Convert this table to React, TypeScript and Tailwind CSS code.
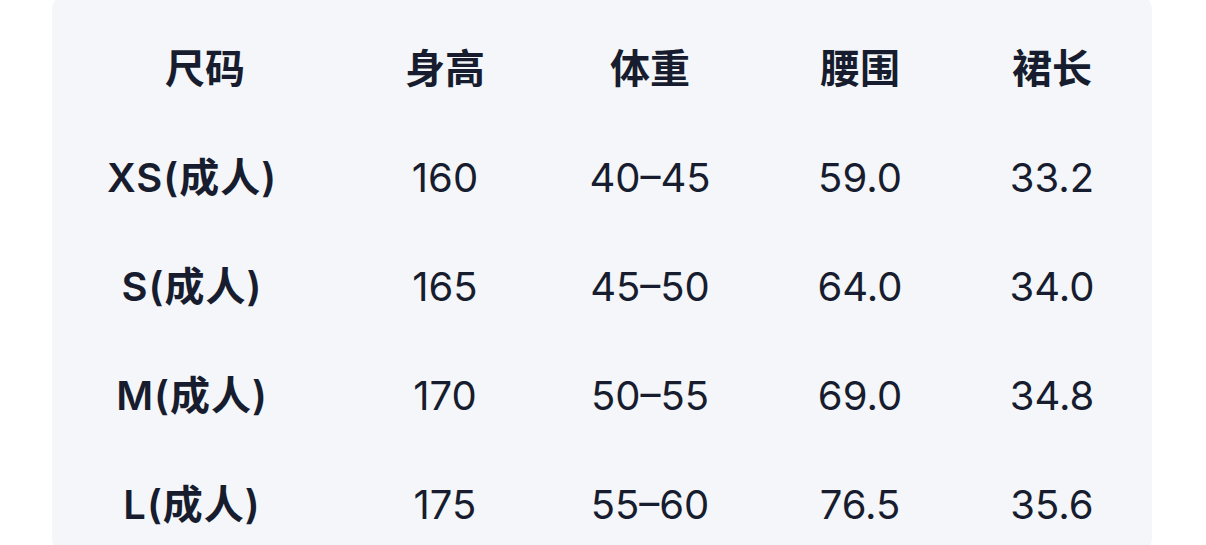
const headers = ['尺码', '身高', '体重', '腰围', '裙长'];

const rows = [
  ['XS(成人)', '160', '40–45', '59.0', '33.2'],
  ['S(成人)', '165', '45–50', '64.0', '34.0'],
  ['M(成人)', '170', '50–55', '69.0', '34.8'],
  ['L(成人)', '175', '55–60', '76.5', '35.6'],
];

const cols = 'grid grid-cols-[306px_174px_236px_184px_200px]';

export default function App() {
  return (
    <div
      className="w-[1206px] h-[545px] overflow-hidden bg-white"
      style={{ fontFamily: 'Inter, "Noto Sans CJK SC", sans-serif' }}
    >
      <div className="ml-[52px] mt-[-6px] w-[1100px] h-[560px] rounded-2xl bg-[#f4f6f9] pt-[20px] text-[#171d2e]">
        <div className={`${cols} h-[109px] items-center text-[40px] font-bold`}>
          {headers.map((h) => (
            <div key={h} className="text-center">
              {h}
            </div>
          ))}
        </div>
        {rows.map((row) => (
          <div key={row[0]} className={`${cols} h-[109px] items-center text-[40px]`}>
            {row.map((cell, i) => (
              <div
                key={i}
                className={i === 0 ? 'pr-[26px] text-center font-semibold tracking-[1px]' : 'text-center'}
              >
                {cell}
              </div>
            ))}
          </div>
        ))}
      </div>
    </div>
  );
}
